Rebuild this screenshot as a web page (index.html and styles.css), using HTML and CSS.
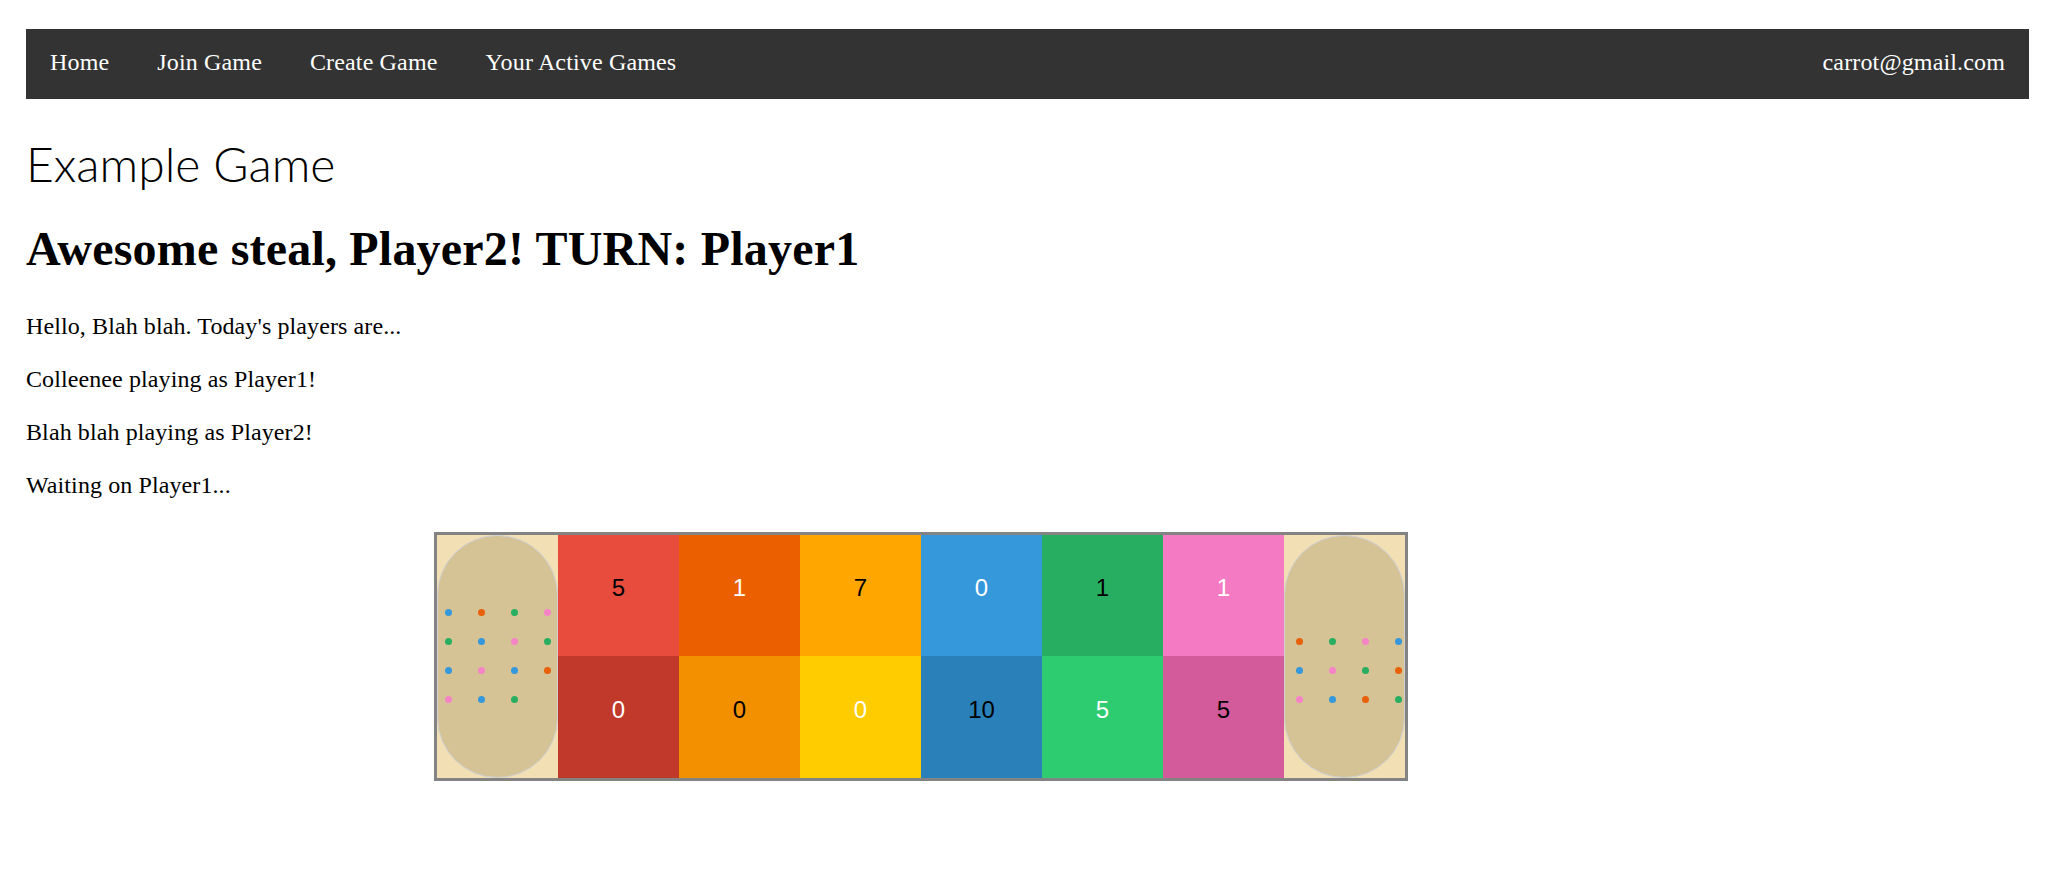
FILE: index.html
```html
<!DOCTYPE html>
<html lang="en">
<head>
<meta charset="utf-8">
<title>Example Game</title>
<link rel="stylesheet" href="styles.css">
</head>
<body>
<div class="page">
  <nav class="topnav">
    <div class="nav-links">
      <a class="nav-link" href="#">Home</a>
      <a class="nav-link" href="#">Join Game</a>
      <a class="nav-link" href="#">Create Game</a>
      <a class="nav-link" href="#">Your Active Games</a>
    </div>
    <a class="nav-link" href="#">carrot@gmail.com</a>
  </nav>

  <div class="site-title">Example Game</div>
  <h1 class="status">Awesome steal, Player2! TURN: Player1</h1>
  <p class="msg">Hello, Blah blah. Today's players are...</p>
  <p class="msg">Colleenee playing as Player1!</p>
  <p class="msg">Blah blah playing as Player2!</p>
  <p class="msg">Waiting on Player1...</p>

  <div class="board">
    <div class="store">
      <div class="store-oval">
        <div class="marbles">
          <span class="dot blue"></span><span class="dot orange"></span><span class="dot green"></span><span class="dot pink"></span>
          <span class="dot green"></span><span class="dot blue"></span><span class="dot pink"></span><span class="dot green"></span>
          <span class="dot blue"></span><span class="dot pink"></span><span class="dot blue"></span><span class="dot orange"></span>
          <span class="dot pink"></span><span class="dot blue"></span><span class="dot green"></span>
        </div>
      </div>
    </div>
    <div class="pits">
      <div class="pit p-red">5</div>
      <div class="pit p-orange light">1</div>
      <div class="pit p-amber">7</div>
      <div class="pit p-blue light">0</div>
      <div class="pit p-green">1</div>
      <div class="pit p-pink light">1</div>
      <div class="pit p-darkred light">0</div>
      <div class="pit p-darkorange">0</div>
      <div class="pit p-yellow light">0</div>
      <div class="pit p-darkblue">10</div>
      <div class="pit p-lightgreen light">5</div>
      <div class="pit p-darkpink">5</div>
    </div>
    <div class="store">
      <div class="store-oval">
        <div class="marbles marbles-shift">
          <span class="dot orange"></span><span class="dot green"></span><span class="dot pink"></span><span class="dot blue"></span>
          <span class="dot blue"></span><span class="dot pink"></span><span class="dot green"></span><span class="dot orange"></span>
          <span class="dot pink"></span><span class="dot blue"></span><span class="dot orange"></span><span class="dot green"></span>
        </div>
      </div>
    </div>
  </div>
</div>
</body>
</html>
```

FILE: styles.css
```css
* { box-sizing: border-box; }

html, body {
  margin: 0;
  padding: 0;
  background: #ffffff;
}

body {
  font-family: "Liberation Serif", "Times New Roman", serif;
  color: #000;
}

.page {
  padding: 29px 19px 0 26px;
}

.topnav {
  height: 70px;
  padding-bottom: 5px;
  background: #333333;
  display: flex;
  align-items: center;
  justify-content: space-between;
}

.nav-links {
  display: flex;
}

.nav-link {
  color: #ffffff;
  text-decoration: none;
  font-size: 24px;
  letter-spacing: 0.15px;
  padding: 0 24px;
  line-height: 28px;
}

.site-title {
  font-family: "Lato", "Roboto", sans-serif;
  font-weight: 300;
  font-size: 48px;
  line-height: 1.2;
  margin-top: 36px;
  color: #000;
}

.status {
  font-size: 48px;
  font-weight: bold;
  letter-spacing: 0.2px;
  line-height: 55px;
  margin: 28px 0 36px;
}

.msg {
  font-size: 24px;
  letter-spacing: 0.1px;
  line-height: 29px;
  margin: 0 0 24px;
}

.board {
  display: flex;
  width: fit-content;
  margin: 32px 0 0 408px;
  border: 3px solid #838383;
}

.store {
  width: 121px;
  height: 243px;
  background: #f2dfb4;
  display: flex;
}

.store-oval {
  flex: 1;
  border-radius: 61px;
  background: #d5c395;
  border: 1px solid #cfd0d4;
  display: flex;
  flex-direction: column;
  justify-content: center;
}

.marbles {
  display: grid;
  grid-template-columns: repeat(4, 7px);
  grid-auto-rows: 7px;
  column-gap: 26px;
  row-gap: 22px;
  justify-content: center;
  align-content: end;
  height: 94px;
}

.marbles-shift {
  padding-left: 8px;
}

.dot {
  width: 7px;
  height: 7px;
  border-radius: 50%;
}

.dot.blue { background: #3498db; }
.dot.orange { background: #e8600a; }
.dot.green { background: #27ae60; }
.dot.pink { background: #f484c6; }

.pits {
  display: grid;
  grid-template-columns: repeat(6, 121px);
  grid-template-rows: 121px 122px;
}

.pit {
  display: flex;
  align-items: center;
  justify-content: center;
  padding-bottom: 14px;
  font-family: "Liberation Sans", Arial, sans-serif;
  font-size: 24px;
  color: #000;
}

.pit.light { color: #ffffff; }

.p-red { background: #e74c3c; }
.p-orange { background: #eb5f00; }
.p-amber { background: #ffa600; }
.p-blue { background: #3598db; }
.p-green { background: #27ae60; }
.p-pink { background: #f47bc3; }
.p-darkred { background: #c0392b; }
.p-darkorange { background: #f39000; }
.p-yellow { background: #ffcc00; }
.p-darkblue { background: #2a80b9; }
.p-lightgreen { background: #2ecc71; }
.p-darkpink { background: #d35b9b; }
```
